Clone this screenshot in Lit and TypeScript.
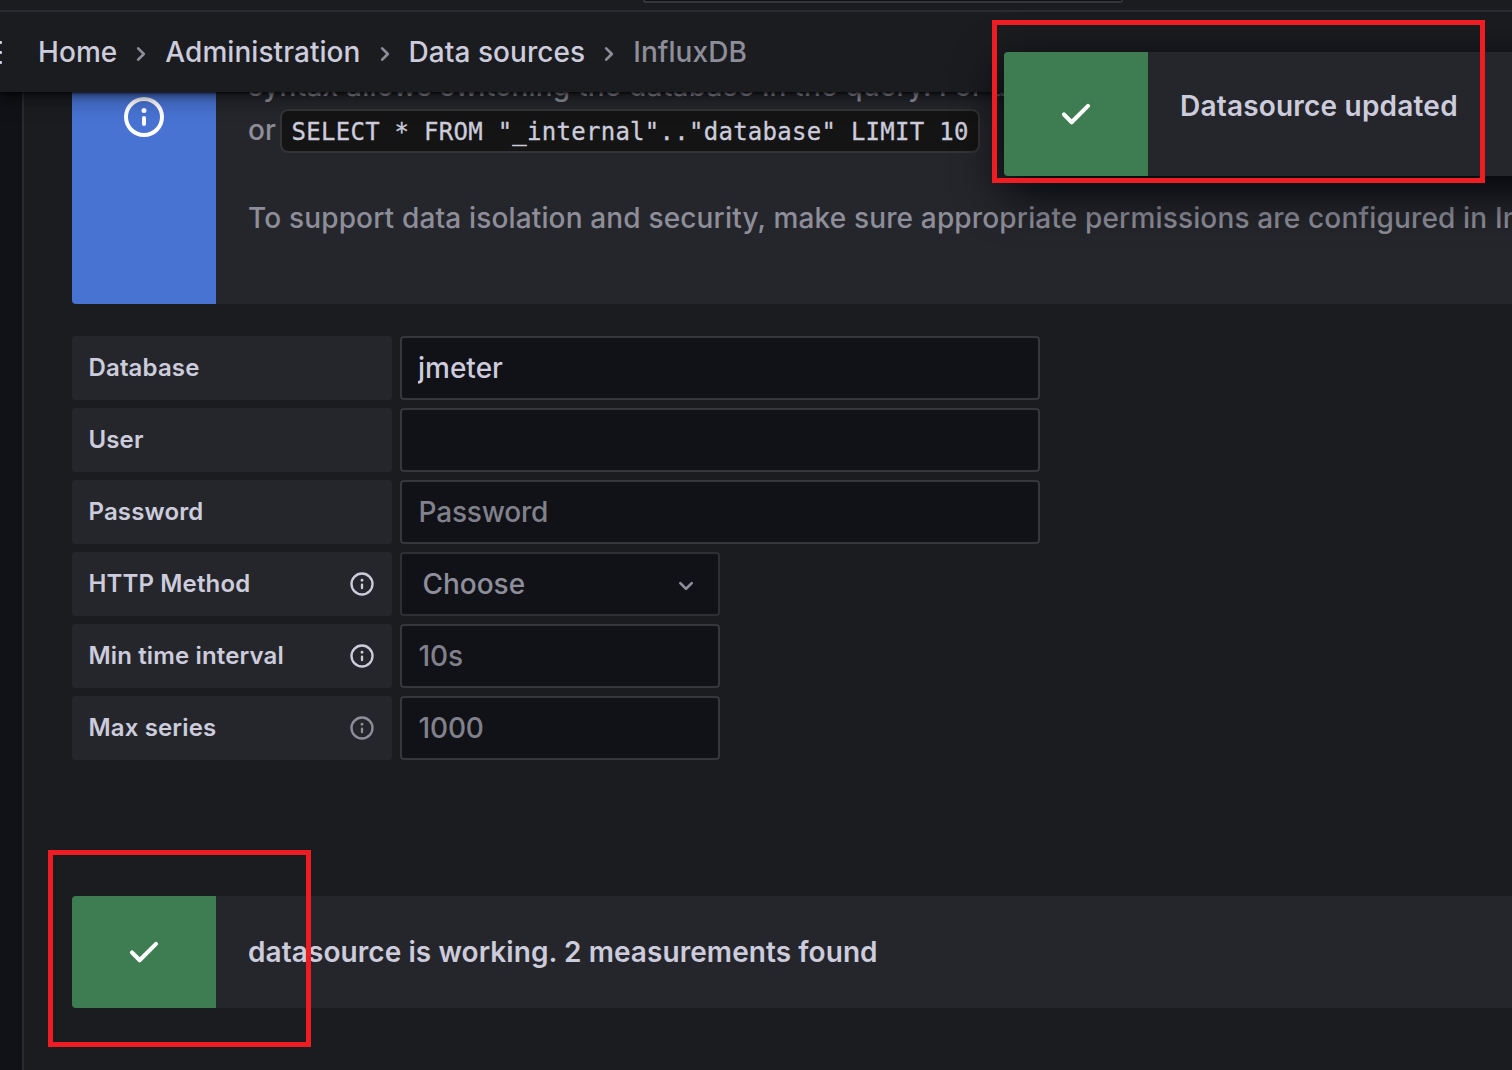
import { LitElement, html, css, svg, nothing } from "lit";
import { customElement, property } from "lit/decorators.js";

const ICONS: Record<string, string> = {
  info: "M12,2A10,10,0,1,0,22,12,10,10,0,0,0,12,2Zm0,18a8,8,0,1,1,8-8A8,8,0,0,1,12,20Zm0-8.5a1,1,0,0,0-1,1v3a1,1,0,0,0,2,0v-3A1,1,0,0,0,12,11.5Zm0-4a1.25,1.25,0,1,0,1.25,1.25A1.25,1.25,0,0,0,12,7.5Z",
  check:
    "M18.71,7.21a1,1,0,0,0-1.42,0L9.84,14.67,6.71,11.53A1,1,0,1,0,5.29,13l3.84,3.84a1,1,0,0,0,1.42,0l8.16-8.16A1,1,0,0,0,18.71,7.21Z",
  right:
    "M14.83,11.29,10.59,7.05a1,1,0,0,0-1.42,0,1,1,0,0,0,0,1.41L12.71,12,9.17,15.54a1,1,0,0,0,0,1.41,1,1,0,0,0,.71.29,1,1,0,0,0,.71-.29l4.24-4.24A1,1,0,0,0,14.83,11.29Z",
  down: "M17,9.17a1,1,0,0,0-1.41,0L12,12.71,8.46,9.17a1,1,0,0,0-1.41,0,1,1,0,0,0,0,1.42l4.24,4.24a1,1,0,0,0,1.42,0L17,10.59A1,1,0,0,0,17,9.17Z",
};

const icon = (name: string, size: number) => html`
  <svg width=${size} height=${size} viewBox="0 0 24 24" fill="currentColor" aria-hidden="true">
    ${svg`<path d=${ICONS[name]}></path>`}
  </svg>
`;

@customElement("ds-alert")
class DsAlert extends LitElement {
  @property() icon = "check";
  @property({ reflect: true }) severity = "success";

  static styles = css`
    :host {
      display: flex;
      background: #25262b;
      border-radius: 4px 0 0 4px;
    }
    .badge {
      flex: none;
      width: 144px;
      display: flex;
      align-items: center;
      justify-content: center;
      color: #fff;
      background: #3e7d51;
      border-radius: 4px 0 0 4px;
    }
    :host([severity="info"]) .badge {
      background: #4873d3;
    }
    .body {
      flex: 1;
      padding-left: 32px;
      display: flex;
      flex-direction: column;
      justify-content: var(--body-align, center);
      white-space: nowrap;
    }
    svg {
      display: block;
    }
  `;

  render() {
    return html`
      <div class="badge">${icon(this.icon, 48)}</div>
      <div class="body"><slot></slot></div>
    `;
  }
}

interface Field {
  label: string;
  kind: "input" | "select";
  wide?: boolean;
  value?: string;
  placeholder?: string;
  tip?: "bright" | "dim";
}

const FIELDS: Field[] = [
  { label: "Database", kind: "input", wide: true, value: "jmeter" },
  { label: "User", kind: "input", wide: true },
  { label: "Password", kind: "input", wide: true, placeholder: "Password" },
  { label: "HTTP Method", kind: "select", placeholder: "Choose", tip: "bright" },
  { label: "Min time interval", kind: "input", placeholder: "10s", tip: "bright" },
  { label: "Max series", kind: "input", placeholder: "1000", tip: "dim" },
];

const CRUMBS = ["Home", "Administration", "Data sources", "InfluxDB"];

@customElement("app-root")
class AppRoot extends LitElement {
  static styles = css`
    :host {
      display: flex;
      flex-direction: column;
      position: relative;
      width: 1512px;
      height: 1070px;
      overflow: hidden;
      box-sizing: border-box;
      background: #1b1c20;
      color: #ccccdc;
      font: 450 28px/44px Inter, "Liberation Sans", sans-serif;
      letter-spacing: 0.14px;
    }
    * {
      box-sizing: border-box;
    }
    svg {
      display: block;
      flex: none;
    }
    .topbar {
      flex: none;
      height: 12px;
      border-bottom: 2px solid #2a2b30;
      padding-left: 643px;
      position: relative;
      z-index: 2;
      background: #1b1c20;
    }
    .search {
      width: 480px;
      height: 3px;
      background: #111217;
      border: 2px solid #34353a;
      border-top: 0;
      border-radius: 0 0 4px 4px;
    }
    .nav {
      flex: none;
      height: 80px;
      display: flex;
      align-items: center;
      position: relative;
      z-index: 1;
      background: #1b1c20;
      letter-spacing: 0.06px;
      box-shadow: 0 1.2px 3px #000, 0 4px 8px rgb(0 0 0 / 40%), 0 10px 20px rgb(0 0 0 / 23%);
    }
    .menu {
      width: 38px;
      height: 23px;
      display: flex;
      flex-direction: column;
      justify-content: space-between;
    }
    .menu i {
      width: 2px;
      height: 3px;
      border-radius: 0 1px 1px 0;
      background: #ccccdc;
    }
    .crumb {
      display: flex;
      align-items: center;
      height: 44px;
    }
    .crumb.last {
      color: #8e8e9a;
    }
    .sep {
      width: 48px;
      display: flex;
      justify-content: center;
      padding-top: 4px;
      color: #8e8e9a;
    }
    .main {
      flex: 1;
      min-height: 0;
      display: flex;
      overflow: hidden;
      background: #111217;
      padding-left: 22px;
    }
    .page {
      flex: 1;
      min-width: 0;
      border-left: 2px solid #2a2b30;
      padding-left: 48px;
      background: #1b1c20;
    }
    .intro {
      --body-align: flex-end;
      height: 374px;
      margin-top: -162px;
      color: #8e8e9a;
      letter-spacing: 0.155px;
    }
    .intro p {
      margin: 0;
      height: 44px;
      display: flex;
      align-items: center;
    }
    .intro .first {
      letter-spacing: 0.2px;
    }
    .intro .gap {
      margin-top: 44px;
      margin-bottom: 64px;
    }
    code {
      height: 44px;
      margin: 2px 0 0 4px;
      padding: 0 9px 0 9.5px;
      border: 2px solid #343438;
      border-radius: 8px;
      background: #141414;
      color: #ccccdc;
      font: 400 24px/42px "DejaVu Sans Mono", "Liberation Mono", monospace;
      letter-spacing: 0.27px;
      -webkit-text-stroke: 0.3px #ccccdc;
      white-space: pre;
    }
    .form {
      display: grid;
      gap: 8px;
      padding-top: 32px;
      padding-bottom: 136px;
    }
    .row {
      display: flex;
      gap: 8px;
      height: 64px;
    }
    .label {
      width: 320px;
      padding: 0 16px 0 16.5px;
      display: flex;
      align-items: center;
      justify-content: space-between;
      background: #25262b;
      border-radius: 4px;
      font-size: 24px;
      font-weight: 560;
    }
    .tip.dim {
      color: #8e8e9a;
    }
    .control {
      width: 320px;
      height: 64px;
      margin: 0;
      padding: 0 16px;
      border: 2px solid #36373b;
      border-radius: 4px;
      background: #111217;
      color: #ccccdc;
      font: inherit;
      letter-spacing: 0;
      outline: none;
    }
    .control.wide {
      width: 640px;
    }
    .control:placeholder-shown {
      padding-left: 16.6px;
    }
    .control::placeholder {
      color: #81818c;
      opacity: 1;
      letter-spacing: -0.2px;
    }
    .select {
      display: flex;
      align-items: center;
      justify-content: space-between;
      padding: 0 16px 0 20.4px;
      border-color: #2e2f34;
      color: #8e8e9a;
    }
    .select .arrow {
      padding-top: 4px;
    }
    .status {
      height: 112px;
      font-weight: 560;
      letter-spacing: 0.07px;
    }
    .toast {
      position: absolute;
      z-index: 3;
      left: 1004px;
      top: 52px;
      width: 600px;
      height: 124px;
      font-weight: 560;
      letter-spacing: 0.2px;
      box-shadow: 0 16px 48px rgb(1, 4, 9);
    }
    .toast-text {
      padding-bottom: 16px;
    }
    .mark {
      position: absolute;
      z-index: 4;
      border: 5px solid #ee1c23;
    }
    .mark.a {
      left: 992px;
      top: 20px;
      width: 493px;
      height: 163px;
    }
    .mark.b {
      left: 48px;
      top: 850px;
      width: 263px;
      height: 197px;
    }
  `;

  private field(f: Field) {
    return html`
      <div class="row">
        <div class="label">
          <span>${f.label}</span>
          ${f.tip ? html`<span class="tip ${f.tip}">${icon("info", 28)}</span>` : nothing}
        </div>
        ${f.kind === "select"
          ? html`<div class="control select">
              <span>${f.placeholder}</span><span class="arrow">${icon("down", 32)}</span>
            </div>`
          : html`<input
              class="control ${f.wide ? "wide" : ""}"
              .value=${f.value ?? ""}
              placeholder=${f.placeholder ?? ""}
            />`}
      </div>
    `;
  }

  render() {
    return html`
      <div class="topbar"><div class="search"></div></div>
      <nav class="nav">
        <div class="menu"><i></i><i></i><i></i></div>
        ${CRUMBS.map((c, n) => {
          const last = n === CRUMBS.length - 1;
          return html`<span class="crumb ${last ? "last" : ""}">${c}</span>${last
              ? nothing
              : html`<span class="sep">${icon("right", 32)}</span>`}`;
        })}
      </nav>
      <div class="main">
        <div class="page">
          <ds-alert class="intro" severity="info" icon="info">
            <p class="first">syntax allows switching the database in the query. For a</p>
            <p>or<code>SELECT * FROM "_internal".."database" LIMIT 10</code></p>
            <p class="gap">
              To support data isolation and security, make sure appropriate permissions are configured in InfluxDB.
            </p>
          </ds-alert>
          <div class="form">${FIELDS.map((f) => this.field(f))}</div>
          <ds-alert class="status"><span>datasource is working. 2 measurements found</span></ds-alert>
        </div>
      </div>
      <ds-alert class="toast"><span class="toast-text">Datasource updated</span></ds-alert>
      <div class="mark a"></div>
      <div class="mark b"></div>
    `;
  }
}
